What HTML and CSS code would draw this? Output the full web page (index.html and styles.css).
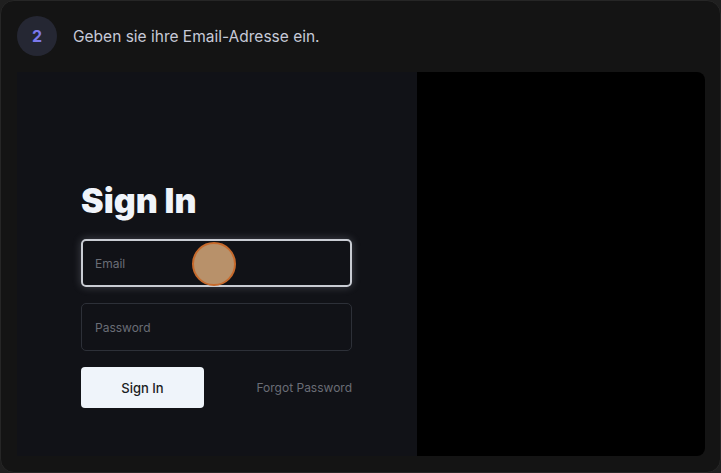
FILE: index.html
```html
<!DOCTYPE html>
<html>
<head>
<meta charset="utf-8">
<link rel="stylesheet" href="styles.css">
</head>
<body>
<div class="card">
  <div class="header">
    <div class="badge">2</div>
    <div class="title">Geben sie ihre Email-Adresse ein.</div>
  </div>
  <div class="panel">
    <div class="left">
      <h1 class="heading">Sign In</h1>
      <div class="field focused"><span class="ph">Email</span><div class="cursor"></div></div>
      <div class="field"><span class="ph">Password</span></div>
      <div class="actions">
        <div class="btn">Sign In</div>
        <div class="forgot">Forgot Password</div>
      </div>
    </div>
    <div class="right"></div>
  </div>
</div>
</body>
</html>
```

FILE: styles.css
```css
html, body {
  margin: 0;
  padding: 0;
  background: #1f1f1f;
  width: 721px;
  height: 473px;
  overflow: hidden;
  font-family: Inter, "Noto Sans", sans-serif;
}
.card {
  box-sizing: border-box;
  width: 721px;
  height: 473px;
  background: #141414;
  border: 1px solid #262626;
  border-radius: 14px;
  display: flex;
  flex-direction: column;
}
.header {
  display: flex;
  align-items: center;
  gap: 16px;
  padding: 15px 16px 15px 16px;
  height: 40px;
}
.badge {
  width: 40px;
  height: 40px;
  border-radius: 50%;
  background: #252733;
  color: #7c79eb;
  font-weight: 700;
  font-size: 16px;
  display: flex;
  align-items: center;
  justify-content: center;
}
.title {
  color: #c7cad8;
  font-size: 15.5px;
  padding-top: 1px;
}
.panel {
  flex: 1;
  display: flex;
  margin: 1px 15px 16px 16px;
}
.left {
  width: 336px;
  background: #111217;
  padding: 106px 0 0 64px;
  display: flex;
  flex-direction: column;
}
.heading {
  margin: 0 0 15px 0;
  font-size: 34px;
  font-weight: 900;
  line-height: 46px;
  color: #f0f4fa;
  letter-spacing: 0;
}
.field {
  position: relative;
  box-sizing: border-box;
  width: 271px;
  height: 48px;
  border: 1px solid #2d3038;
  border-radius: 5px;
  display: flex;
  align-items: center;
  padding-left: 13px;
  padding-top: 1px;
  margin-bottom: 16px;
}
.field.focused {
  border: 2px solid #c9ccd3;
  padding-left: 12px;
  box-shadow: 0 0 8px rgba(220, 225, 240, 0.25);
}
.ph {
  color: #6a6d76;
  font-size: 12px;
}
.cursor {
  position: absolute;
  left: 109px;
  top: 1px;
  width: 40px;
  height: 40px;
  border-radius: 50%;
  background: #b8916a;
  border: 2px solid #c76a2c;
}
.actions {
  display: flex;
  align-items: center;
  justify-content: space-between;
  width: 271px;
  margin-top: 0;
}
.btn {
  width: 123px;
  height: 41px;
  border-radius: 4px;
  background: #eff4fa;
  color: #1a1c22;
  font-size: 13px;
  font-weight: 500;
  display: flex;
  align-items: center;
  justify-content: center;
}
.forgot {
  color: #6a6d76;
  font-size: 12px;
}
.right {
  flex: 1;
  background: #000;
  border-radius: 0 8px 8px 0;
}
```
